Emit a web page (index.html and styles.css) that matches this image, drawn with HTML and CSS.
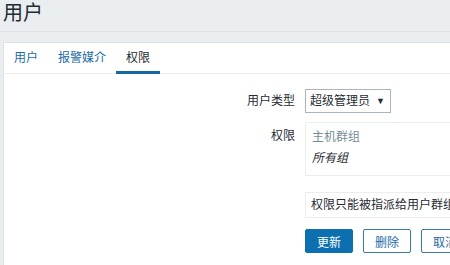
FILE: index.html
```html
<!DOCTYPE html>
<html lang="zh">
<head>
<meta charset="utf-8">
<title>用户</title>
<link rel="stylesheet" href="styles.css">
</head>
<body>
<header class="page-header">
  <h1 class="title">用户</h1>
</header>
<main class="card">
  <ul class="tabs">
    <li class="tab"><a>用户</a></li>
    <li class="tab"><a>报警媒介</a></li>
    <li class="tab active"><a>权限</a></li>
  </ul>
  <div class="form">
    <div class="label">用户类型</div>
    <div class="field">
      <div class="select"><span>超级管理员</span><span class="arrow">▼</span></div>
    </div>
    <div class="label label-perm">权限</div>
    <div class="field">
      <div class="perm-box">
        <div class="perm-head">主机群组</div>
        <div class="perm-row">所有组</div>
      </div>
    </div>
    <div class="label"></div>
    <div class="field field-info">
      <div class="info">权限只能被指派给用户群组。</div>
    </div>
    <div class="label"></div>
    <div class="field field-buttons">
      <button class="btn btn-primary">更新</button>
      <button class="btn btn-alt">删除</button>
      <button class="btn btn-alt">取消</button>
    </div>
  </div>
</main>
</body>
</html>
```

FILE: styles.css
```css
* { box-sizing: border-box; }
html, body {
  margin: 0;
  padding: 0;
  width: 450px;
  height: 265px;
  overflow: hidden;
  background: #ebeef1;
  color: #1f2c33;
  font-family: "Liberation Sans", "Noto Sans CJK SC", sans-serif;
  font-size: 12px;
}
.page-header {
  height: 32px;
  border-bottom: 1px solid #dde2e6;
  padding-left: 3px;
}
.title {
  margin: 0;
  font-size: 20px;
  font-weight: normal;
  line-height: 26px;
  color: #1f2c33;
}
.card {
  margin: 10px 0 0 3px;
  width: 600px;
  height: 300px;
  background: #fff;
  border: 1px solid #dfe4e7;
}
.tabs {
  list-style: none;
  margin: 0;
  padding: 0;
  display: flex;
  height: 31px;
  border-bottom: 1px solid #ebeef1;
}
.tab {
  padding: 0 10px;
  line-height: 30px;
  height: 31px;
  margin-bottom: -1px;
  color: #1d6aa6;
}
.tab.active {
  color: #1f2c33;
  border-bottom: 3px solid #1566a5;
}
.form {
  display: grid;
  grid-template-columns: 291px 1fr;
  column-gap: 10px;
  padding-top: 15px;
}
.label {
  text-align: right;
  line-height: 24px;
}
.label-perm { padding-top: 2px; margin-top: 9px; }
.field { min-height: 24px; }
.select {
  display: flex;
  align-items: center;
  justify-content: space-between;
  width: 86px;
  height: 24px;
  padding: 0 5px 0 4px;
  border: 1px solid #a9b5bc;
  background: #fff;
  line-height: 22px;
}
.arrow { font-size: 9px; color: #1f2c33; }
.perm-box {
  margin-top: 9px;
  width: 300px;
  height: 54px;
  border: 1px solid #ebeef1;
  padding: 6px 6px 0;
  line-height: 17px;
}
.perm-head { color: #768d99; }
.perm-row { font-style: italic; margin-top: 4px; }
.field-info { margin-top: 16px; }
.info {
  width: 300px;
  height: 26px;
  line-height: 24px;
  padding-left: 5px;
  border: 1px solid #ebeef1;
}
.field-buttons {
  margin-top: 11px;
  display: flex;
  gap: 10px;
}
.btn {
  width: 48px;
  height: 24px;
  border-radius: 2px;
  font-family: inherit;
  font-size: 12px;
  padding: 0;
  cursor: pointer;
}
.btn-primary {
  background: #0b6fb0;
  border: 1px solid #0b6fb0;
  color: #fff;
}
.btn-alt {
  background: #fff;
  border: 1px solid #3b7aa6;
  color: #1d6aa6;
}
```
